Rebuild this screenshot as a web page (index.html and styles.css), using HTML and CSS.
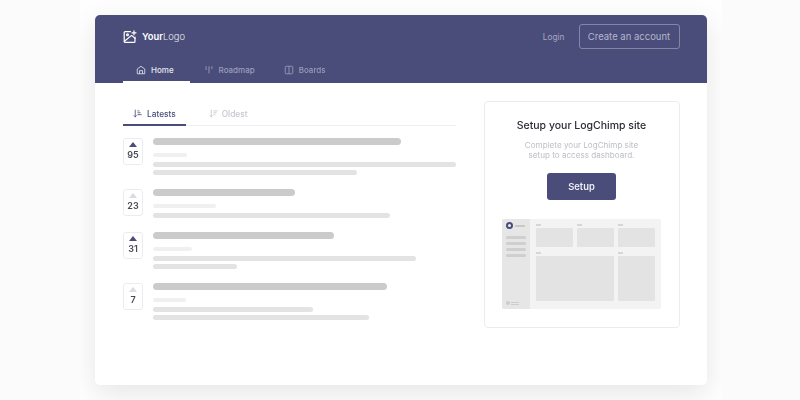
FILE: index.html
```html
<!DOCTYPE html>
<html lang="en">
<head>
<meta charset="utf-8">
<title>LogChimp</title>
<link rel="stylesheet" href="styles.css">
</head>
<body>
<div class="stage">
  <main class="card">
    <header class="header">
      <div class="topbar">
        <div class="logo">
          <svg class="logo-icon" viewBox="0 0 14 14" fill="none" stroke="currentColor" stroke-width="1.2" stroke-linecap="round" stroke-linejoin="round"><path d="M7.5 1.6H2.2a1 1 0 0 0-1 1v8.8a1 1 0 0 0 1 1H11a1 1 0 0 0 1-1V7"/><path d="M1.4 11.2 8.6 5.4 12 8.4"/><circle cx="4.5" cy="4.8" r=".9"/><path d="M11 .8v4M9 2.8h4"/></svg>
          <span class="logo-text"><b>Your</b>Logo</span>
        </div>
        <div class="auth">
          <span class="login">Login</span>
          <span class="create">Create an account</span>
        </div>
      </div>
      <nav class="nav">
        <span class="nav-item active">
          <svg class="nav-icon" viewBox="0 0 12 12" fill="none" stroke="currentColor" stroke-width="1" stroke-linejoin="round"><path d="M1.500 10.500V4.800L6 1.500l4.500 3.300v5.700z"/><path d="M4.200 10.500V6.800h3.600v3.700"/></svg>
          Home
        </span>
        <span class="nav-item">
          <svg class="nav-icon" viewBox="0 0 12 12" fill="none" stroke="currentColor" stroke-width="1.100" stroke-linecap="round"><path d="M2.500 2v3.500M6 2v7.500M9.500 2v2.500"/></svg>
          Roadmap
        </span>
        <span class="nav-item">
          <svg class="nav-icon" viewBox="0 0 12 12" fill="none" stroke="currentColor" stroke-width="1" stroke-linejoin="round"><rect x="1.500" y="1.500" width="9" height="9" rx="1.200"/><path d="M6 1.500v9"/></svg>
          Boards
        </span>
      </nav>
    </header>
    <div class="content">
      <section class="feed">
        <div class="sort">
          <span class="sort-item active">
            <svg class="sort-icon" viewBox="0 0 12 12" fill="none" stroke="currentColor" stroke-width="1.100" stroke-linecap="round" stroke-linejoin="round"><path d="M3 1.500v9M1.300 8.800 3 10.500l1.700-1.700"/><path d="M6.500 2.500h1.500M6.500 5h3M6.500 7.500h4.500"/></svg>
            Latests
          </span>
          <span class="sort-item">
            <svg class="sort-icon" viewBox="0 0 12 12" fill="none" stroke="currentColor" stroke-width="1.100" stroke-linecap="round" stroke-linejoin="round"><path d="M3 1.500v9M1.300 8.800 3 10.500l1.700-1.700"/><path d="M6.500 2.500h4.500M6.500 5h3M6.500 7.500h1.500"/></svg>
            Oldest
          </span>
        </div>
        <div class="posts">
          <article class="post">
            <div class="vote"><span class="arrow on"></span><span class="count">95</span></div>
            <div class="bars">
              <div class="bar title w248"></div>
              <div class="bar meta w34"></div>
              <div class="bar line w303"></div>
              <div class="bar line w204"></div>
            </div>
          </article>
          <article class="post">
            <div class="vote"><span class="arrow"></span><span class="count">23</span></div>
            <div class="bars">
              <div class="bar title w142"></div>
              <div class="bar meta w63"></div>
              <div class="bar line w237"></div>
            </div>
          </article>
          <article class="post">
            <div class="vote"><span class="arrow on"></span><span class="count">31</span></div>
            <div class="bars">
              <div class="bar title w181"></div>
              <div class="bar meta w39"></div>
              <div class="bar line w263"></div>
              <div class="bar line w84"></div>
            </div>
          </article>
          <article class="post">
            <div class="vote"><span class="arrow"></span><span class="count">7</span></div>
            <div class="bars">
              <div class="bar title w234"></div>
              <div class="bar meta w33"></div>
              <div class="bar line w160"></div>
              <div class="bar line w216"></div>
            </div>
          </article>
        </div>
      </section>
      <aside class="setup">
        <h2 class="setup-title">Setup your LogChimp site</h2>
        <p class="setup-text">Complete your LogChimp site<br>setup to access dashboard.</p>
        <span class="setup-btn">Setup</span>
        <div class="mock">
          <div class="mock-side">
            <div class="mock-brand"><span class="mock-dot"></span><span class="mock-name"></span></div>
            <div class="mock-links"><i></i><i></i><i></i><i></i></div>
            <div class="mock-user"><span class="mock-avatar"></span><span class="mock-lines"><i></i><i></i></span></div>
          </div>
          <div class="mock-main">
            <div class="mock-cell"><i></i><b></b></div>
            <div class="mock-cell"><i></i><b></b></div>
            <div class="mock-cell"><i></i><b></b></div>
            <div class="mock-cell wide"><i></i><b></b></div>
            <div class="mock-cell"><i></i><b></b></div>
          </div>
        </div>
      </aside>
    </div>
  </main>
</div>
</body>
</html>
```
FILE: styles.css
```css
* { box-sizing: border-box; }
html, body { margin: 0; height: 100%; }
body {
  background: #fbfbfb;
  font-family: Inter, "Liberation Sans", sans-serif;
  overflow: hidden;
}
.stage {
  width: 642px;
  height: 400px;
  margin-left: 80px;
  padding: 15px;
  background: #fefefe;
  overflow: hidden;
}
.card {
  height: 370px;
  background: #fff;
  border-radius: 5px;
  box-shadow: 0 8px 28px rgba(0, 0, 0, .1);
  filter: blur(.35px);
}
.header {
  height: 68px;
  padding: 9px 27.500px 0 28px;
  background: #4a4d7a;
  border-radius: 5px 5px 0 0;
  color: #fff;
}
.topbar {
  display: flex;
  justify-content: space-between;
  align-items: center;
  height: 25px;
}
.logo { display: flex; align-items: center; gap: 5px; }
.logo-icon { width: 14px; height: 14px; display: block; }
.logo-text { font-size: 9.400px; font-weight: 300; color: #e8e8f0; }
.logo-text b { font-weight: 600; color: #fff; }
.auth { display: flex; align-items: center; gap: 14px; }
.login { font-size: 8.300px; color: #a6a8c4; }
.create {
  display: flex;
  align-items: center;
  justify-content: center;
  width: 101px;
  height: 25px;
  border: 1px solid #8486a8;
  border-radius: 3px;
  font-size: 9.500px;
  color: #b4b5cd;
}
.nav { display: flex; margin-top: 10px; }
.nav-item {
  display: flex;
  align-items: center;
  gap: 5px;
  height: 24px;
  padding: 0 15px 0 14px;
  font-size: 8px;
  font-weight: 500;
  color: #9c9ebd;
  border-bottom: 2px solid transparent;
}
.nav-item.active { padding: 0 16px 0 13px; color: #e6e6ee; border-bottom-color: #fff; }
.nav-icon { width: 10px; height: 10px; display: block; flex: none; }
.content {
  display: flex;
  justify-content: space-between;
  padding: 18px 27.500px 0 28px;
}
.feed { width: 333px; }
.sort {
  display: flex;
  height: 25px;
  border-bottom: 1px solid #f0f0f2;
}
.sort-item {
  display: flex;
  align-items: center;
  gap: 4px;
  height: 25px;
  padding: 2px 10px 0 0;
  font-size: 8.300px;
  font-weight: 500;
  color: #c5c5cf;
  border-bottom: 2px solid transparent;
}
.sort-item.active {
  gap: 5px;
  margin-right: 23px;
  padding-left: 10px;
  color: #4a4d7a;
  border-bottom-color: #4a4d7a;
}
.sort-icon { width: 9px; height: 9px; display: block; flex: none; }
.posts { display: flex; flex-direction: column; gap: 14px; margin-top: 12px; }
.post { display: flex; gap: 10px; }
.vote {
  display: flex;
  flex-direction: column;
  align-items: center;
  justify-content: center;
  gap: 3px;
  flex: none;
  width: 20px;
  height: 27px;
  padding-bottom: 2px;
  border: 1px solid #ececee;
  border-radius: 3px;
}
.arrow {
  width: 0;
  height: 0;
  border-left: 4px solid transparent;
  border-right: 4px solid transparent;
  border-bottom: 5px solid #dcdce0;
}
.arrow.on { border-bottom-color: #4a4d7a; }
.count { font-size: 9px; line-height: 10px; font-weight: 600; color: #4a4a55; }
.bars { flex: 1; display: flex; flex-direction: column; }
.bar { border-radius: 4px; }
.title { height: 7px; background: #cbcbcb; margin-bottom: 8px; }
.meta { height: 4px; background: #f0f0f0; margin-bottom: 5px; }
.line { height: 5px; background: #e3e3e3; }
.line + .line { margin-top: 3px; }
.w248 { width: 248px; } .w142 { width: 142px; } .w181 { width: 181px; } .w234 { width: 234px; }
.w34 { width: 34px; } .w63 { width: 63px; } .w39 { width: 39px; } .w33 { width: 33px; }
.w303 { width: 303px; } .w204 { width: 204px; } .w237 { width: 237px; } .w263 { width: 263px; }
.w84 { width: 84px; } .w160 { width: 160px; } .w216 { width: 216px; }
.setup {
  display: flex;
  flex-direction: column;
  align-items: center;
  width: 196px;
  height: 227px;
  padding-top: 17px;
  border: 1px solid #ececee;
  border-radius: 4px;
}
.setup-title { margin: 0; font-size: 10.500px; line-height: 14px; font-weight: 500; color: #2b2b35; }
.setup-text {
  margin: 7px 0 0;
  font-size: 8.100px;
  line-height: 10px;
  text-align: center;
  color: #bcbcc8;
}
.setup-btn {
  display: flex;
  align-items: center;
  justify-content: center;
  flex: none;
  width: 69px;
  height: 27px;
  margin-top: 13px;
  background: #4a4d7a;
  border-radius: 3px;
  font-size: 9.400px;
  font-weight: 600;
  color: #eeeef4;
}
.mock {
  display: flex;
  flex: none;
  width: 159px;
  height: 90px;
  margin-top: 19px;
  background: #f3f3f3;
  border-radius: 2px;
  overflow: hidden;
}
.mock-side {
  display: flex;
  flex-direction: column;
  width: 28px;
  padding: 3px 4px 4px 4px;
  background: #e6e6e6;
}
.mock-brand { display: flex; align-items: center; gap: 2px; margin-bottom: 7px; }
.mock-dot {
  width: 7px;
  height: 7px;
  flex: none;
  background: #eeeef4;
  border: 2px solid #4a4d7a;
  border-radius: 50%;
}
.mock-name { width: 10px; height: 2px; background: #c8c8c8; }
.mock-links { display: flex; flex-direction: column; gap: 3px; }
.mock-links i { display: block; height: 3px; background: #cfcfcf; border-radius: 2px; }
.mock-user { display: flex; align-items: center; gap: 1px; margin-top: auto; }
.mock-avatar { width: 4px; height: 4px; background: #cdcdcd; border-radius: 50%; flex: none; }
.mock-lines { display: flex; flex-direction: column; gap: 1px; }
.mock-lines i { display: block; height: 1px; width: 8px; background: #cdcdcd; }
.mock-main {
  flex: 1;
  display: grid;
  grid-template-columns: 37px 37px 37px;
  grid-template-rows: 23px 49px;
  column-gap: 4px;
  row-gap: 5px;
  padding: 5px 0 0 6px;
}
.mock-cell { display: flex; flex-direction: column; }
.mock-cell.wide { grid-column: span 2; }
.mock-cell i { display: block; width: 5px; height: 2px; margin-bottom: 2px; background: #d6d6d6; }
.mock-cell b { display: block; flex: 1; background: #e3e3e3; border-radius: 1px; }
```
